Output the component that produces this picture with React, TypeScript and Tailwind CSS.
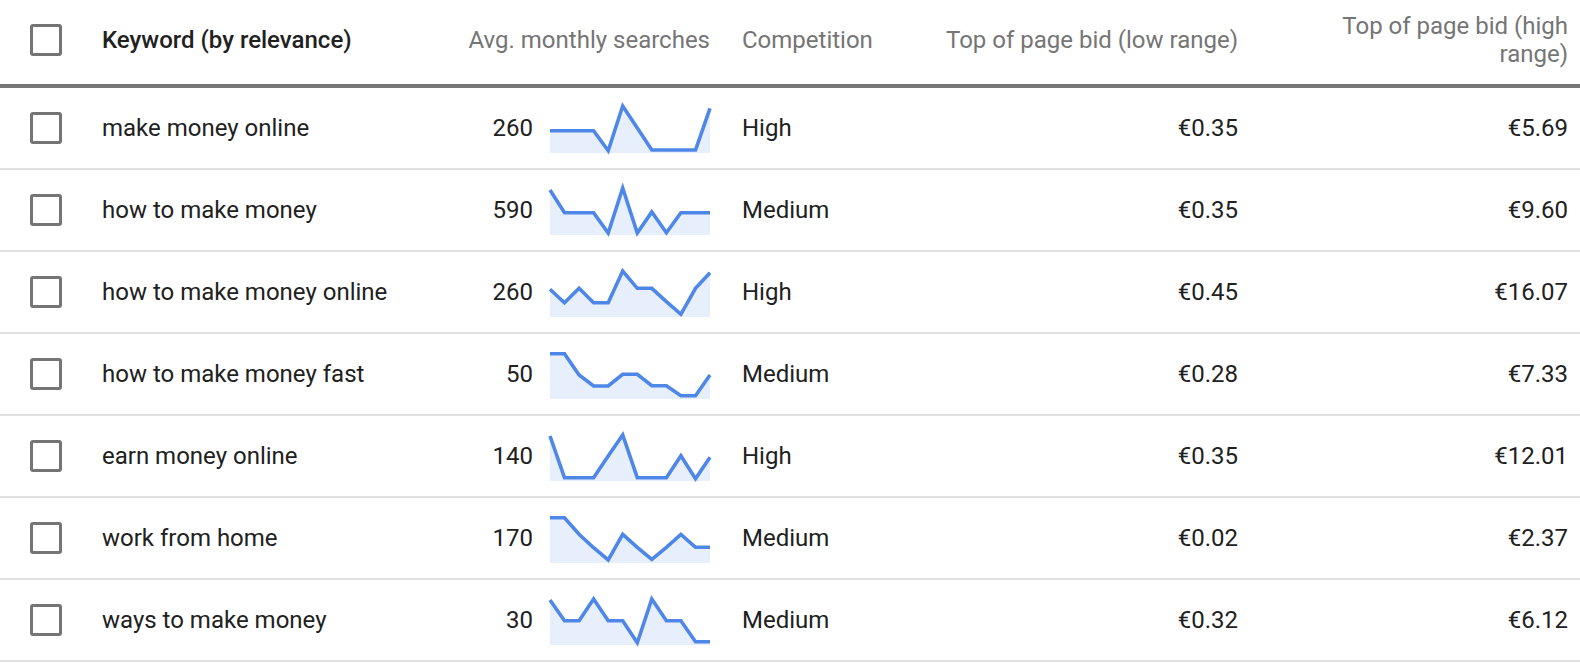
const rows = [
  {
    keyword: "make money online",
    searches: 260,
    trend: [27.7, 27.7, 27.7, 27.7, 47.7, 3, 25, 47, 47, 47, 47, 5.3],
    competition: "High",
    low: "€0.35",
    high: "€5.69",
  },
  {
    keyword: "how to make money",
    searches: 590,
    trend: [5, 27.7, 27.7, 27.7, 48, 3, 48, 27, 47.7, 27.7, 27.7, 27.7],
    competition: "Medium",
    low: "€0.35",
    high: "€9.60",
  },
  {
    keyword: "how to make money online",
    searches: 260,
    trend: [22.3, 35.7, 21.3, 35.7, 35.7, 4, 21.3, 21.3, 34.7, 47.3, 21.3, 5.7],
    competition: "High",
    low: "€0.45",
    high: "€16.07",
  },
  {
    keyword: "how to make money fast",
    searches: 50,
    trend: [4.7, 4.7, 26, 37, 37, 25.3, 25.3, 36.7, 36.7, 46.7, 46.7, 26],
    competition: "Medium",
    low: "€0.28",
    high: "€7.33",
  },
  {
    keyword: "earn money online",
    searches: 140,
    trend: [5, 46.7, 46.7, 46.7, 25, 4, 46.7, 46.7, 46.7, 24.7, 47.7, 26.3],
    competition: "High",
    low: "€0.35",
    high: "€12.01",
  },
  {
    keyword: "work from home",
    searches: 170,
    trend: [4.7, 4.7, 21.3, 34.7, 47, 21.3, 34.3, 46.3, 34.3, 21.3, 34.3, 34.3],
    competition: "Medium",
    low: "€0.02",
    high: "€2.37",
  },
  {
    keyword: "ways to make money",
    searches: 30,
    trend: [5, 25.7, 25.7, 4, 25.7, 25.7, 47.7, 4, 25.7, 25.7, 46.7, 46.7],
    competition: "Medium",
    low: "€0.32",
    high: "€6.12",
  },
]

function Checkbox({ className = "" }: { className?: string }) {
  return (
    <div
      className={`w-8 h-8 shrink-0 rounded-[3px] border-[3px] border-[#757575] bg-white ${className}`}
    />
  )
}

function Sparkline({ points }: { points: number[] }) {
  const w = 160
  const h = 50
  const step = w / (points.length - 1)
  const line = points.map((y, i) => `${(i * step).toFixed(1)},${y}`).join(" ")
  const area = `0,${h} ${line} ${w},${h}`
  return (
    <svg width={w} height={h} viewBox={`0 0 ${w} ${h}`} className="shrink-0 overflow-visible">
      <polygon points={area} fill="#e8effc" />
      <polyline
        points={line}
        fill="none"
        stroke="#4f87e8"
        strokeWidth="3.6"
        strokeLinejoin="miter"
      />
    </svg>
  )
}

export default function App() {
  return (
    <div className="w-[1580px] h-[664px] bg-white text-[24px] leading-[30px] text-[#212121] font-['Roboto',sans-serif] overflow-hidden">
      {/* header */}
      <div className="flex items-center h-[88px] pb-1 border-b-4 border-[#767676] leading-[28px]">
        <div className="pl-[30px]">
          <Checkbox />
        </div>
        <div className="ml-[40px] w-[300px] font-medium">Keyword (by relevance)</div>
        <div className="w-[308px] text-right text-[#757575]">Avg. monthly searches</div>
        <div className="ml-[32px] w-[190px] text-[#757575]">Competition</div>
        <div className="w-[306px] text-right text-[#757575]">Top of page bid (low range)</div>
        <div className="w-[330px] flex justify-end text-[#757575]">
          <span className="max-w-[250px] text-right">Top of page bid (high range)</span>
        </div>
      </div>

      {rows.map((r) => (
        <div
          key={r.keyword}
          className="flex items-center h-[82px] border-b-2 border-[#e0e0e0]"
        >
          <div className="pl-[30px]">
            <Checkbox />
          </div>
          <div className="ml-[40px] w-[300px]">{r.keyword}</div>
          <div className="w-[308px] flex items-center justify-end gap-[17px]">
            <span>{r.searches}</span>
            <Sparkline points={r.trend} />
          </div>
          <div className="ml-[32px] w-[190px]">{r.competition}</div>
          <div className="w-[306px] text-right">{r.low}</div>
          <div className="w-[330px] text-right">{r.high}</div>
        </div>
      ))}
    </div>
  )
}
